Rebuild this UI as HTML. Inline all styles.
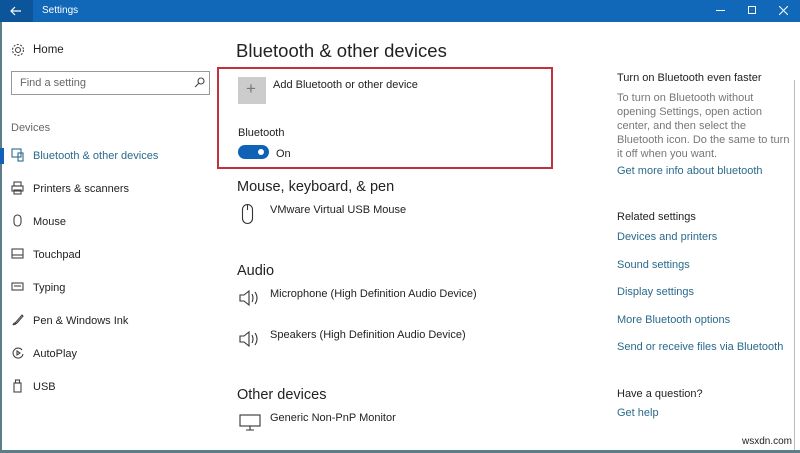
<!DOCTYPE html>
<html><head><meta charset="utf-8"><style>
*{margin:0;padding:0;box-sizing:border-box}
body{width:800px;height:453px;overflow:hidden;background:#fff;font-family:"Liberation Sans",sans-serif;color:#222;position:relative}
.a{position:absolute;white-space:nowrap}
.s{font-size:11px;margin-top:1px}
.lk{color:#2a6a8c;font-size:11px;margin-top:1px}
.h2{font-size:14.5px;color:#222;margin-top:1px}
.nav{font-size:11px;color:#222;margin-top:1px}
.ic{position:absolute;stroke:#444;fill:none;stroke-width:1.1}
</style></head><body>
<div class="a" style="left:0;top:0;width:800px;height:22px;background:#1168b8"></div>
<div class="a" style="left:0;top:0;width:33px;height:22px;background:#0d559a"></div>
<svg class="a" style="left:9px;top:5px" width="14" height="12"><path d="M12 6H2M6 2L2 6l4 4" stroke="#fff" stroke-width="1.2" fill="none"/></svg>
<div class="a" style="left:42px;top:5px;font-size:10px;color:#fff">Settings</div>
<div class="a" style="left:716px;top:10px;width:9px;height:1px;background:#fff"></div>
<div class="a" style="left:748px;top:6px;width:8px;height:8px;border:1px solid #fff"></div>
<svg class="a" style="left:779px;top:6px" width="9" height="9"><path d="M0 0L9 9M9 0L0 9" stroke="#fff" stroke-width="1"/></svg>
<div class="a" style="left:0;top:22px;width:2px;height:431px;background:#5a7f88"></div>
<div class="a" style="left:0;top:450px;width:800px;height:3px;background:#5a7f88"></div>
<div class="a" style="left:794px;top:80px;width:1px;height:370px;background:#bbb"></div>

<svg class="ic" style="left:11px;top:43px" width="14" height="14"><circle cx="7" cy="7" r="2.5"/><circle cx="7" cy="7" r="5.5" stroke-dasharray="2 1.5"/></svg>
<div class="a" style="left:33px;top:44px;font-size:11.5px">Home</div>
<div class="a" style="left:11px;top:71px;width:199px;height:24px;border:1px solid #999"></div>
<div class="a" style="left:20px;top:77px;font-size:11px;color:#666">Find a setting</div>
<svg class="ic" style="left:194px;top:77px" width="11" height="11"><circle cx="7" cy="4" r="3"/><path d="M5 6L1 10"/></svg>
<div class="a" style="left:11px;top:122px;font-size:11px;color:#666">Devices</div>
<div class="a" style="left:0;top:148px;width:4px;height:16px;background:#0f62b6"></div>
<svg class="ic" style="left:11px;top:148px;stroke:#2a6a8c" width="14" height="14"><rect x="1" y="1" width="9" height="8"/><rect x="7" y="5" width="5" height="8"/></svg>
<div class="a lk" style="left:33px;top:149px">Bluetooth &amp; other devices</div>
<svg class="ic" style="left:11px;top:181px" width="14" height="14"><rect x="1" y="5" width="11" height="5"/><rect x="3" y="1" width="7" height="4"/><rect x="3" y="9" width="7" height="4"/></svg>
<div class="a nav" style="left:33px;top:182px">Printers &amp; scanners</div>
<svg class="ic" style="left:12px;top:214px" width="12" height="14"><rect x="2" y="1" width="7" height="11" rx="3.5"/></svg>
<div class="a nav" style="left:33px;top:215px">Mouse</div>
<svg class="ic" style="left:11px;top:247px" width="14" height="14"><rect x="1" y="2" width="11" height="9"/><path d="M1 8h11"/></svg>
<div class="a nav" style="left:33px;top:248px">Touchpad</div>
<svg class="ic" style="left:11px;top:280px" width="14" height="14"><rect x="1" y="3" width="11" height="7"/><path d="M3 6h7"/></svg>
<div class="a nav" style="left:33px;top:281px">Typing</div>
<svg class="ic" style="left:11px;top:313px" width="14" height="14"><path d="M2 12L5 9l6-7 1 1-6 7-4 2zM2 12c1-3 3-2 2 0"/></svg>
<div class="a nav" style="left:33px;top:314px">Pen &amp; Windows Ink</div>
<svg class="ic" style="left:11px;top:346px" width="14" height="14"><path d="M11 4A5 5 0 1 0 12 8"/><path d="M6 5l3 2-3 2z"/></svg>
<div class="a nav" style="left:33px;top:347px">AutoPlay</div>
<svg class="ic" style="left:12px;top:379px" width="12" height="14"><rect x="2" y="4" width="7" height="9"/><rect x="3.5" y="1" width="4" height="3"/></svg>
<div class="a nav" style="left:33px;top:380px">USB</div>

<div class="a" style="left:236px;top:40px;font-size:18.5px;color:#222">Bluetooth &amp; other devices</div>
<div class="a" style="left:217px;top:67px;width:336px;height:102px;border:2px solid #c3323c"></div>
<div class="a" style="left:238px;top:77px;width:28px;height:27px;background:#ccc"></div>
<div class="a" style="left:246px;top:79px;font-size:17px;color:#777">+</div>
<div class="a s" style="left:273px;top:78px">Add Bluetooth or other device</div>
<div class="a s" style="left:238px;top:126px">Bluetooth</div>
<div class="a" style="left:238px;top:145px;width:31px;height:14px;border-radius:7px;background:#0f62b6"></div>
<div class="a" style="left:258px;top:149px;width:6px;height:6px;border-radius:3px;background:#fff"></div>
<div class="a s" style="left:276px;top:147px">On</div>

<div class="a h2" style="left:237px;top:178px">Mouse, keyboard, &amp; pen</div>
<svg class="ic" style="left:241px;top:203px;stroke:#333" width="14" height="24"><rect x="1.5" y="1.5" width="10" height="19" rx="5"/><path d="M6.5 2v5"/></svg>
<div class="a s" style="left:270px;top:203px">VMware Virtual USB Mouse</div>
<div class="a h2" style="left:237px;top:262px">Audio</div>
<svg class="ic" style="left:238px;top:288px;stroke:#333" width="24" height="20"><path d="M2 7h4l5-4v14l-5-4H2z"/><path d="M14 6q2 4 0 8M17 4q4 6 0 12"/></svg>
<div class="a s" style="left:270px;top:287px">Microphone (High Definition Audio Device)</div>
<svg class="ic" style="left:238px;top:329px;stroke:#333" width="24" height="20"><path d="M2 7h4l5-4v14l-5-4H2z"/><path d="M14 6q2 4 0 8M17 4q4 6 0 12"/></svg>
<div class="a s" style="left:270px;top:328px">Speakers (High Definition Audio Device)</div>
<div class="a h2" style="left:237px;top:386px">Other devices</div>
<svg class="ic" style="left:239px;top:414px;stroke:#333" width="22" height="18"><rect x="1" y="1" width="20" height="11"/><path d="M11 12v4M7 16h8"/></svg>
<div class="a s" style="left:270px;top:411px">Generic Non-PnP Monitor</div>

<div class="a s" style="left:617px;top:71px;color:#222">Turn on Bluetooth even faster</div>
<div class="a" style="left:617px;top:91px;font-size:11px;color:#777;line-height:14px;white-space:normal;width:175px">To turn on Bluetooth without opening Settings, open action center, and then select the Bluetooth icon. Do the same to turn it off when you want.</div>
<div class="a lk" style="left:617px;top:164px">Get more info about bluetooth</div>
<div class="a s" style="left:617px;top:210px">Related settings</div>
<div class="a lk" style="left:617px;top:230px">Devices and printers</div>
<div class="a lk" style="left:617px;top:258px">Sound settings</div>
<div class="a lk" style="left:617px;top:285px">Display settings</div>
<div class="a lk" style="left:617px;top:313px">More Bluetooth options</div>
<div class="a lk" style="left:617px;top:340px">Send or receive files via Bluetooth</div>
<div class="a s" style="left:617px;top:387px">Have a question?</div>
<div class="a lk" style="left:617px;top:406px">Get help</div>
<div class="a" style="left:742px;top:436px;font-size:10px;color:#222">wsxdn.com</div>
</body></html>
